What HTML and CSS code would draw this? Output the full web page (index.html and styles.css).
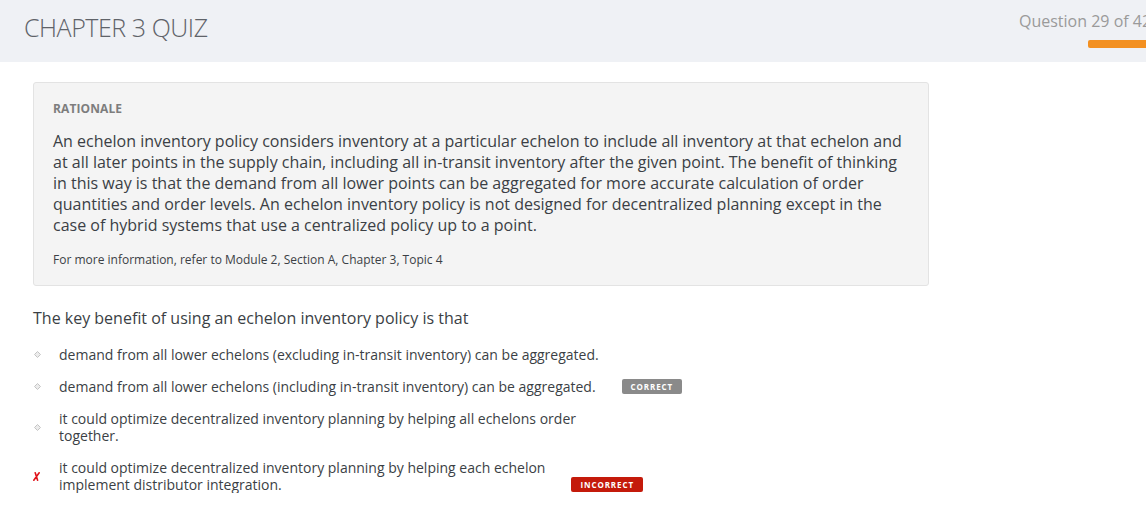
FILE: index.html
```html
<!DOCTYPE html>
<html>
<head>
<meta charset="utf-8">
<link rel="stylesheet" href="styles.css">
</head>
<body>
<header class="topbar">
  <h1 class="title">CHAPTER 3 QUIZ</h1>
  <div class="progress">
    <div class="progress-label">Question 29 of 42</div>
    <div class="progress-bar"></div>
  </div>
</header>
<main class="content">
  <section class="rationale">
    <h2 class="rationale-head">RATIONALE</h2>
    <p class="rationale-text">An echelon inventory policy considers inventory at a particular echelon to include all inventory at that echelon and at all later points in the supply chain, including all in-transit inventory after the given point. The benefit of thinking in this way is that the demand from all lower points can be aggregated for more accurate calculation of order quantities and order levels. An echelon inventory policy is not designed for decentralized planning except in the case of hybrid systems that use a centralized policy up to a point.</p>
    <p class="rationale-ref">For more information, refer to Module 2, Section A, Chapter 3, Topic 4</p>
  </section>
  <p class="question">The key benefit of using an echelon inventory policy is that</p>
  <ul class="options">
    <li class="option">
      <span class="marker"><svg width="7" height="7" viewBox="0 0 7 7"><path d="M3.5 0.5 L6.5 3.5 L3.5 6.5 L0.5 3.5 Z" fill="#ececec" stroke="#c4c4c4" stroke-width="1"/></svg></span>
      <span class="option-text">demand from all lower echelons (excluding in-transit inventory) can be aggregated.</span>
    </li>
    <li class="option">
      <span class="marker"><svg width="7" height="7" viewBox="0 0 7 7"><path d="M3.5 0.5 L6.5 3.5 L3.5 6.5 L0.5 3.5 Z" fill="#ececec" stroke="#c4c4c4" stroke-width="1"/></svg></span>
      <span class="option-text">demand from all lower echelons (including in-transit inventory) can be aggregated.</span>
      <span class="badge badge-correct">CORRECT</span>
    </li>
    <li class="option">
      <span class="marker"><svg width="7" height="7" viewBox="0 0 7 7"><path d="M3.5 0.5 L6.5 3.5 L3.5 6.5 L0.5 3.5 Z" fill="#ececec" stroke="#c4c4c4" stroke-width="1"/></svg></span>
      <span class="option-text">it could optimize decentralized inventory planning by helping all echelons order<br>together.</span>
    </li>
    <li class="option">
      <span class="marker marker-x"><svg width="7" height="9" viewBox="0 0 7 9"><path d="M2.2 0.8 L4.6 8.2 M6.2 0.8 L0.8 8.2" fill="none" stroke="#e0141b" stroke-width="1.6" stroke-linecap="round"/></svg></span>
      <span class="option-text">it could optimize decentralized inventory planning by helping each echelon<br>implement distributor integration.</span>
      <span class="badge badge-incorrect">INCORRECT</span>
    </li>
  </ul>
</main>
</body>
</html>
```
FILE: styles.css
```css
* { box-sizing: border-box; }
html, body { margin: 0; padding: 0; }
body {
  font-family: "Open Sans", "Liberation Sans", sans-serif;
  background: #fff;
  color: #333;
  width: 1146px;
  overflow: hidden;
}
.topbar {
  height: 62px;
  background: #eff1f5;
  display: flex;
  justify-content: space-between;
  align-items: flex-start;
  overflow: hidden;
}
.title {
  margin: 10px 0 0 24px;
  font-size: 25px;
  font-weight: 300;
  line-height: 35px;
  color: #5f6369;
  letter-spacing: -0.45px;
}
.progress {
  margin: 10px -30px 0 0;
  width: 157px;
  display: flex;
  flex-direction: column;
  align-items: flex-start;
}
.progress-label {
  font-size: 16px;
  line-height: 22px;
  color: #9a9a9a;
  white-space: nowrap;
}
.progress-bar {
  margin: 8px 0 0 69px;
  width: 90px;
  height: 8px;
  background: #f39021;
  border-radius: 2px;
}
.content {
  padding: 20px 0 0 33px;
}
.rationale {
  width: 896px;
  background: #f4f4f4;
  border: 1px solid #e3e3e3;
  border-radius: 3px;
  padding: 18px 20px 17px 19px;
}
.rationale-head {
  margin: 0;
  font-size: 12px;
  font-weight: 700;
  line-height: 16px;
  color: #7d7d7d;
  letter-spacing: 0.1px;
}
.rationale-text {
  margin: 14px 0 0;
  font-size: 16px;
  line-height: 21px;
  color: #3b3f45;
}
.rationale-ref {
  margin: 16px 0 0;
  font-size: 12px;
  line-height: 16px;
  color: #3b3f45;
}
.question {
  margin: 22px 0 0;
  font-size: 16px;
  line-height: 21px;
  color: #3b3f45;
}
.options {
  list-style: none;
  margin: 17px 0 0;
  padding: 0;
  display: flex;
  flex-direction: column;
  gap: 15px;
}
.option {
  display: flex;
  align-items: flex-end;
  font-size: 14px;
  line-height: 17px;
  color: #3b3f45;
}
.marker {
  width: 26px;
  flex: none;
  align-self: center;
  display: flex;
  padding-left: 1px;
}
.marker-x {
  padding-left: 0;
}
.badge {
  flex: none;
  margin: 0 0 1px 26px;
  height: 15px;
  padding: 0 9px;
  border-radius: 2px;
  color: #fff;
  font-size: 8px;
  font-weight: 700;
  line-height: 15px;
  letter-spacing: 0.9px;
}
.badge-correct {
  background: #8a8a8a;
}
.badge-incorrect {
  background: #c41a0b;
}
```
